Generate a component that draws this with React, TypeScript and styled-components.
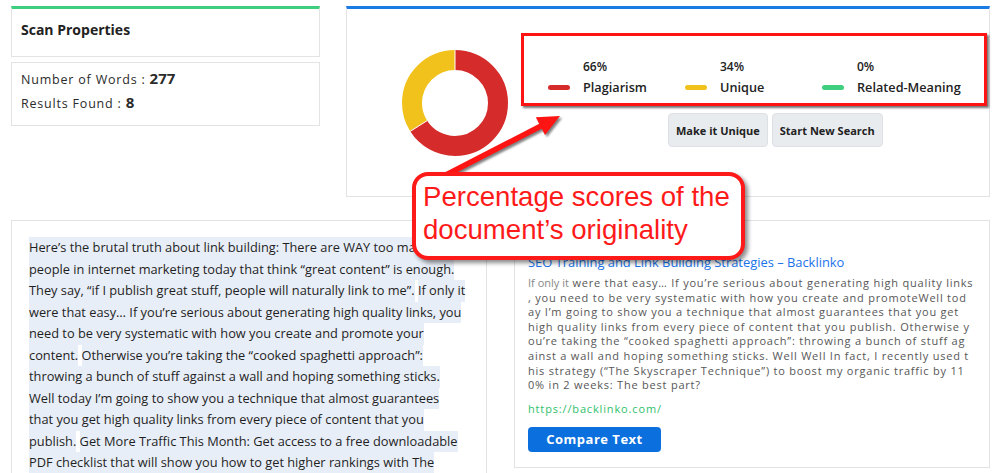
import React from "react";
import styled, { createGlobalStyle } from "styled-components";

const GlobalStyle = createGlobalStyle`
  html, body {
    margin: 0;
    padding: 0;
    background: #ffffff;
  }
  body {
    font-family: "Open Sans", "Noto Sans", sans-serif;
    color: #2b2b2b;
  }
`;

const Page = styled.div`
  position: relative;
  width: 1000px;
  height: 473px;
  overflow: hidden;
  box-sizing: border-box;
  padding: 6px 10px 0 11px;
`;

const TopRow = styled.div`
  display: flex;
  align-items: flex-start;
  gap: 26px;
`;

const LeftCol = styled.div`
  width: 309px;
  display: flex;
  flex-direction: column;
  gap: 5px;
`;

const Card = styled.div<{ $accent?: string; $width?: number; $height?: number }>`
  box-sizing: border-box;
  background: #fff;
  border: 1px solid #e3e3e3;
  ${(p) => (p.$accent ? `border-top: 3px solid ${p.$accent};` : "")}
  ${(p) => (p.$width ? `width: ${p.$width}px;` : "")}
  ${(p) => (p.$height ? `height: ${p.$height}px;` : "")}
`;

const CardTitle = styled.div`
  padding: 12px 9px;
  font-size: 14px;
  font-weight: 700;
  line-height: 18px;
  color: #222;
`;

const Stats = styled.div`
  padding: 4px 9px;
  font-size: 12.5px;
  line-height: 23px;
  letter-spacing: 0.8px;
  color: #2b2b2b;
`;

const StatValue = styled.b`
  font-size: 15px;
  font-weight: 700;
  letter-spacing: 0;
`;

const ChartArea = styled.div`
  display: flex;
  align-items: flex-start;
`;

const Donut = styled.svg`
  margin: 41px 0 0 55px;
  flex: none;
`;

const LegendCol = styled.div`
  margin: 24px 0 0 13px;
  display: flex;
  flex-direction: column;
  gap: 7px;
`;

const LegendFrame = styled.div`
  box-sizing: border-box;
  width: 466px;
  height: 73px;
  border: 3px solid #ff1414;
  box-shadow: 2px 2px 2px rgba(0, 0, 0, 0.55);
  padding: 22px 0 0 24px;
  display: grid;
  grid-template-columns: 137px 137px auto;
`;

const LegendItem = styled.div`
  display: grid;
  grid-template-columns: 22px auto;
  grid-template-rows: 16px 16px;
  column-gap: 13px;
  row-gap: 5px;
  align-items: center;
  white-space: nowrap;
`;

const Percent = styled.div`
  grid-column: 2;
  font-size: 12px;
  font-weight: 600;
  color: #222;
`;

const Swatch = styled.span<{ $color: string }>`
  grid-column: 1;
  grid-row: 2;
  height: 5px;
  border-radius: 3px;
  background: ${(p) => p.$color};
`;

const LegendLabel = styled.div`
  grid-column: 2;
  grid-row: 2;
  font-size: 12.7px;
  font-weight: 600;
  color: #222;
`;

const Actions = styled.div`
  display: flex;
  gap: 4px;
  padding-left: 147px;
`;

const GreyButton = styled.button`
  height: 34px;
  padding: 0 7px;
  border: 1px solid #dde1e5;
  border-radius: 4px;
  background: #e9ecef;
  font-family: "Open Sans", sans-serif;
  font-size: 11px;
  font-weight: 700;
  color: #222;
  cursor: pointer;
`;

const BottomRow = styled.div`
  display: flex;
  align-items: flex-start;
  gap: 27px;
  margin-top: 23px;
`;

const TextCard = styled(Card)`
  padding: 16px 0 0 17px;
`;

const HLine = styled.div`
  white-space: pre;
  font-size: 12.8px;
  color: #1f1f1f;
  line-height: 21.5px;
  height: 21.5px;
`;

const Mark = styled.span`
  display: inline-block;
  background: #e8eef7;
  line-height: 21.5px;
`;

const ResultCard = styled(Card)`
  padding: 32px 13px 0 13px;
`;

const ResultTitle = styled.div`
  font-size: 12.9px;
  line-height: 18px;
  color: #1a73e8;
`;

const Snippet = styled.div`
  margin-top: 5px;
  font-size: 11px;
  font-weight: 500;
  line-height: 14.6px;
  letter-spacing: 0.78px;
  color: #575757;
  white-space: pre;
`;

const Soft = styled.span`
  letter-spacing: 0;
  font-weight: 400;
  color: #888;
`;

const SourceLink = styled.div`
  margin-top: 8px;
  font-size: 11px;
  font-weight: 500;
  line-height: 16px;
  letter-spacing: 0.85px;
  color: #2fbf6b;
`;

const BlueButton = styled.button`
  margin-top: 10px;
  width: 133px;
  height: 25px;
  border: none;
  border-radius: 4px;
  background: #0b6fde;
  color: #fff;
  font-family: "Open Sans", sans-serif;
  font-size: 13px;
  font-weight: 700;
  letter-spacing: 0.5px;
  cursor: pointer;
`;

const ArrowSvg = styled.svg`
  position: absolute;
  left: 420px;
  top: 100px;
  filter: drop-shadow(2px 2px 1px rgba(0, 0, 0, 0.5));
`;

const Callout = styled.div`
  position: absolute;
  left: 412px;
  top: 172px;
  width: 333px;
  height: 88px;
  box-sizing: border-box;
  border: 4px solid #ff1a1a;
  border-radius: 16px;
  background: #fff;
  box-shadow: 3px 3px 4px rgba(0, 0, 0, 0.45);
  padding: 4px 0 0 7px;
  font-family: "Liberation Sans", Arial, sans-serif;
  font-size: 27.6px;
  line-height: 33px;
  color: #ff1a1a;
`;

const legend = [
  { pct: "66%", label: "Plagiarism", color: "#d62b2b" },
  { pct: "34%", label: "Unique", color: "#f1c21b" },
  { pct: "0%", label: "Related-Meaning", color: "#3fcf7f" },
];

const sourceLines: string[][] = [
  ["Here’s the brutal truth about link building: There are WAY too many"],
  ["people in internet marketing today that think “great content” is enough."],
  ["They say, “if I publish great stuff, people will naturally link to me”.", "If only it"],
  ["were that easy… If you’re serious about generating high quality links, you"],
  ["need to be very systematic with how you create and promote your"],
  ["content.", "Otherwise you’re taking the “cooked spaghetti approach”:"],
  ["throwing a bunch of stuff against a wall and hoping something sticks."],
  ["Well today I’m going to show you a technique that almost guarantees"],
  ["that you get high quality links from every piece of content that you"],
  ["publish.", "Get More Traffic This Month: Get access to a free downloadable"],
  ["PDF checklist that will show you how to get higher rankings with The"],
];

const snippetLines = [
  ", you need to be very systematic with how you create and promoteWell tod",
  "ay I’m going to show you a technique that almost guarantees that you get",
  "high quality links from every piece of content that you publish. Otherwise y",
  "ou’re taking the “cooked spaghetti approach”: throwing a bunch of stuff ag",
  "ainst a wall and hoping something sticks. Well Well In fact, I recently used t",
  "his strategy (“The Skyscraper Technique”) to boost my organic traffic by 11",
  "0% in 2 weeks: The best part?",
];

const R = 43;
const CIRC = 2 * Math.PI * R;

const App: React.FC = () => {
  const red = CIRC * 0.66;
  const splitAngle = (0.66 * 360 - 90) * (Math.PI / 180);
  return (
    <>
      <GlobalStyle />
      <Page>
        <TopRow>
          <LeftCol>
            <Card $accent="#3ecf7e" $height={51}>
              <CardTitle>Scan Properties</CardTitle>
            </Card>
            <Card $height={64}>
              <Stats>
                <div>
                  Number of Words : <StatValue>277</StatValue>
                </div>
                <div>
                  Results Found : <StatValue>8</StatValue>
                </div>
              </Stats>
            </Card>
          </LeftCol>

          <Card $accent="#1a7be4" $width={644} $height={191}>
            <ChartArea>
              <Donut width="106" height="106" viewBox="0 0 106 106">
                <g transform="rotate(-90 53 53)">
                  <circle
                    cx="53"
                    cy="53"
                    r={R}
                    fill="none"
                    stroke="#d62b2b"
                    strokeWidth="20"
                    strokeDasharray={`${red} ${CIRC}`}
                  />
                  <circle
                    cx="53"
                    cy="53"
                    r={R}
                    fill="none"
                    stroke="#f1c21b"
                    strokeWidth="20"
                    strokeDasharray={`${CIRC - red} ${CIRC}`}
                    strokeDashoffset={-red}
                  />
                </g>
                <line x1="53" y1="0" x2="53" y2="20" stroke="#fff" strokeWidth="1" />
                <line
                  x1={53 + 33 * Math.cos(splitAngle)}
                  y1={53 + 33 * Math.sin(splitAngle)}
                  x2={53 + 53 * Math.cos(splitAngle)}
                  y2={53 + 53 * Math.sin(splitAngle)}
                  stroke="#fff"
                  strokeWidth="1"
                />
              </Donut>
              <LegendCol>
                <LegendFrame>
                  {legend.map((l) => (
                    <LegendItem key={l.label}>
                      <Percent>{l.pct}</Percent>
                      <Swatch $color={l.color} />
                      <LegendLabel>{l.label}</LegendLabel>
                    </LegendItem>
                  ))}
                </LegendFrame>
                <Actions>
                  <GreyButton>Make it Unique</GreyButton>
                  <GreyButton>Start New Search</GreyButton>
                </Actions>
              </LegendCol>
            </ChartArea>
          </Card>
        </TopRow>

        <BottomRow>
          <TextCard $width={476} $height={270}>
            {sourceLines.map((segs, i) => (
              <HLine key={i}>
                {segs.map((s, j) => (
                  <React.Fragment key={j}>
                    {j > 0 && " "}
                    <Mark>{s}</Mark>
                  </React.Fragment>
                ))}
              </HLine>
            ))}
          </TextCard>

          <ResultCard $width={476} $height={248}>
            <ResultTitle>SEO Training and Link Building Strategies – Backlinko</ResultTitle>
            <Snippet>
              <div>
                <Soft>If only it</Soft> were that easy… If you’re serious about generating high quality links
              </div>
              {snippetLines.map((l, i) => (
                <div key={i}>{l}</div>
              ))}
            </Snippet>
            <SourceLink>https://backlinko.com/</SourceLink>
            <BlueButton>Compare Text</BlueButton>
          </ResultCard>
        </BottomRow>

        <ArrowSvg width="160" height="100" viewBox="0 0 160 100">
          <line x1="20" y1="78" x2="121" y2="26" stroke="#ff1414" strokeWidth="5.5" />
          <polygon points="140,16 125,35 115.8,17.2" fill="#ff1414" />
        </ArrowSvg>

        <Callout>
          Percentage scores of the
          <br />
          document’s originality
        </Callout>
      </Page>
    </>
  );
};

export default App;
